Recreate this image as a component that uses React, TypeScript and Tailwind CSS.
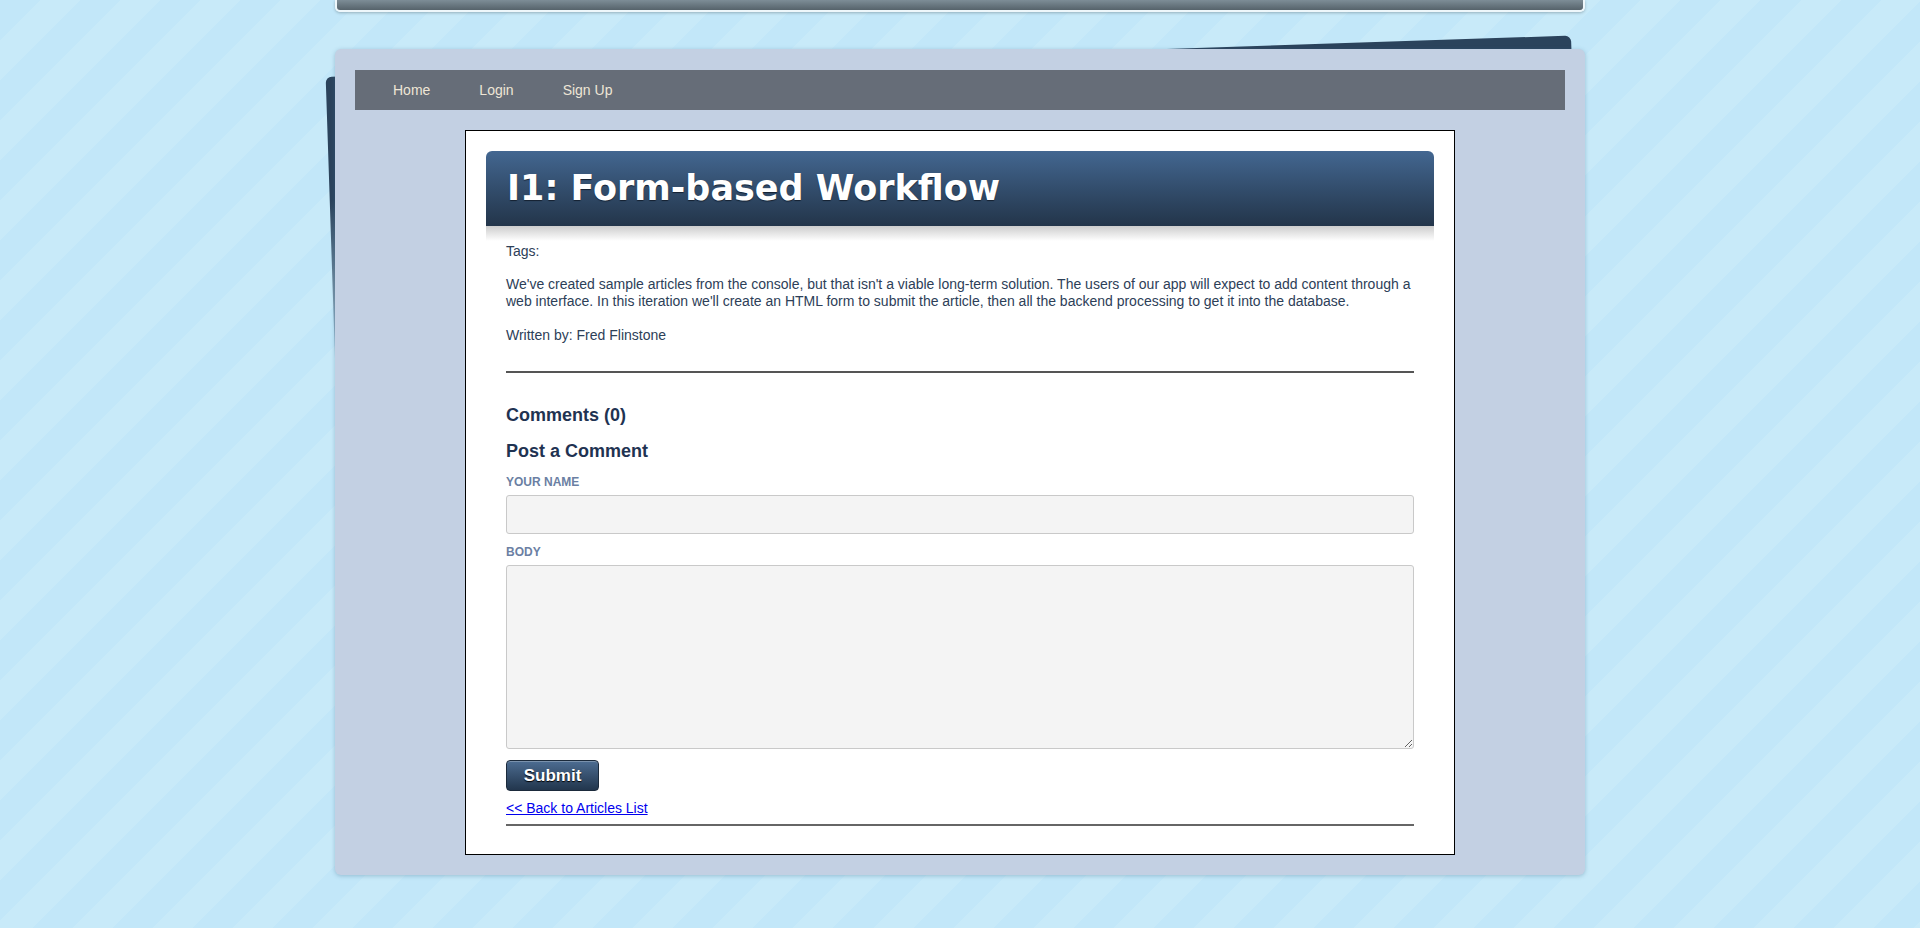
import React from "react";

const navLinks = ["Home", "Login", "Sign Up"];

function TopBar() {
  return (
    <div className="mx-auto h-[12px] w-[1250px] rounded-b-[5px] border-x-2 border-b-2 border-[#eef7fb] bg-linear-to-b from-[#7d8d97] to-[#56636b] shadow-[0_1px_3px_rgba(0,0,0,0.25)]" />
  );
}

function Nav() {
  return (
    <nav className="flex h-[40px] items-center bg-[#666d78] pl-[38px] text-[14px] text-[#eee6d6]">
      {navLinks.map((l) => (
        <a key={l} href="#" className="mr-[49px]">
          {l}
        </a>
      ))}
    </nav>
  );
}

function CommentForm() {
  return (
    <form className="flex flex-col" onSubmit={(e) => e.preventDefault()}>
      <label className="mt-[13px] text-[12px] font-bold uppercase leading-[15px] text-[#6b7fa3]">
        Your Name
      </label>
      <input
        type="text"
        className="mt-[5px] h-[39px] w-full rounded-[3px] border border-[#c9c9c9] bg-[#f4f4f4] px-2 outline-none"
      />
      <label className="mt-[11px] text-[12px] font-bold uppercase leading-[15px] text-[#6b7fa3]">
        Body
      </label>
      <textarea className="mt-[5px] h-[184px] w-full rounded-[3px] border border-[#c9c9c9] bg-[#f4f4f4] px-2 outline-none" />
      <button
        type="submit"
        className="mt-[11px] h-[31px] w-[93px] rounded-[4px] border border-[#1b2a3b] bg-linear-to-b from-[#4d6d92] to-[#22364d] text-[17px] font-bold text-white shadow-[inset_0_1px_0_rgba(255,255,255,0.25)] [text-shadow:0_1px_1px_#000]"
      >
        Submit
      </button>
    </form>
  );
}

export default function App() {
  return (
    <div className="min-h-screen bg-[repeating-linear-gradient(135deg,#c2e7f9_0px,#c2e7f9_28.3px,#c8eaf9_28.3px,#c8eaf9_56.6px)] pb-[53px] font-['Liberation_Sans',Arial,sans-serif]">
      <TopBar />
      <div className="relative mx-auto mt-[37px] w-[1250px]">
        {/* the dark sheet lying tilted behind the panel */}
        <div className="absolute top-[7px] right-[0px] bottom-[-7px] left-[4px] -rotate-[1.9deg] rounded-[6px] bg-linear-to-b from-[#2b435c] from-15% to-transparent to-40%" />
        <div className="relative rounded-[6px] bg-[#c3d0e3] px-[20px] pt-[21px] pb-[20px] shadow-[0_1px_4px_rgba(60,110,140,0.35)]">
          <Nav />
          <div className="mx-auto mt-[20px] w-[990px] border border-black bg-white p-[20px] pb-[28px]">
            <div className="flex h-[75px] items-center rounded-t-[6px] bg-linear-to-b from-[#436791] to-[#23354a] px-[21px]">
              <h1 className="font-['DejaVu_Sans',Verdana,sans-serif] text-[35px] font-bold text-white [text-shadow:0_1px_1px_#142030]">
                I1: Form-based Workflow
              </h1>
            </div>
            <div className="h-[15px] bg-linear-to-b from-[#cdcdcd] to-white" />
            <div className="px-[20px] text-[14px] leading-[17px] text-[#2d4058]">
              <p className="mt-[2px]">Tags:</p>
              <p className="mt-[16px]">
                We've created sample articles from the console, but that isn't a viable long-term solution. The users of our
                app will expect to add content through a web interface. In this iteration we'll create an HTML form to submit
                the article, then all the backend processing to get it into the database.
              </p>
              <p className="mt-[17px]">Written by: Fred Flinstone</p>
              <hr className="mt-[27px] border-t-2 border-[#555]" />
              <h3 className="mt-[31px] text-[18px] font-bold leading-[22px] text-[#1f3352]">Comments (0)</h3>
              <h3 className="mt-[14px] text-[18px] font-bold leading-[22px] text-[#1f3352]">Post a Comment</h3>
              <CommentForm />
              <a href="#" className="mt-[9px] block w-max text-[14px] text-[#0000ee] underline">
                &lt;&lt; Back to Articles List
              </a>
              <hr className="mt-[7px] border-t-2 border-[#666]" />
            </div>
          </div>
        </div>
      </div>
    </div>
  );
}
